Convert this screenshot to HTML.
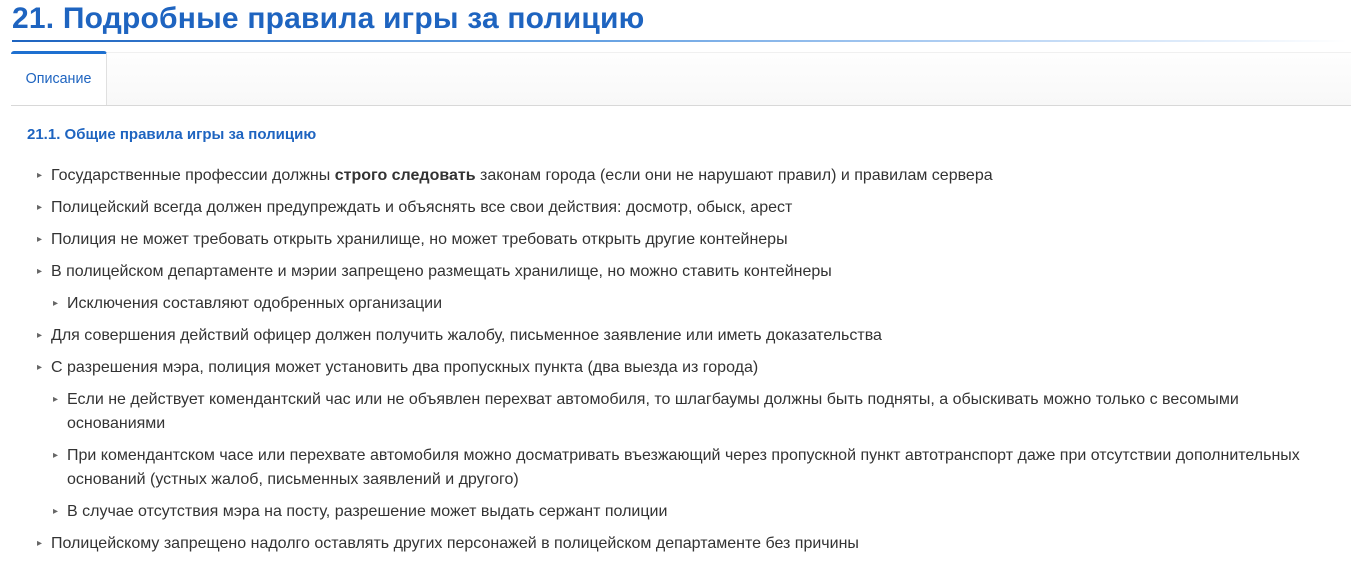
<!DOCTYPE html>
<html><head><meta charset="utf-8"><style>
body{margin:0;background:#fff;font-family:"Liberation Sans",sans-serif;width:1351px;height:561px;overflow:hidden;position:relative}
h1{position:absolute;left:12px;top:0;margin:0;font-size:30px;line-height:38px;color:#1e64c0;font-weight:bold;letter-spacing:0.2px}
.ul{position:absolute;left:12px;top:40px;width:1335px;height:2px;background:linear-gradient(90deg,#1e64c0,#5c9be0 40%,#bcd6f5 75%,rgba(255,255,255,0))}
.bar{position:absolute;left:11px;top:52px;width:1340px;height:52px;border-top:1px solid #f0f0f0;border-bottom:1px solid #d8d8d8;background:linear-gradient(#fefefe,#f8f8f8)}
.tab{position:absolute;left:11px;top:51px;width:96px;height:54px;background:#fff;border-top:3px solid #1e70d0;border-right:1px solid #e0e0e0;border-radius:3px 3px 0 0;box-sizing:border-box;font-size:14.3px;color:#1e64c0;text-align:center;line-height:50px}
h2{position:absolute;left:27px;top:126px;margin:0;font-size:15px;color:#1e64c0;font-weight:bold}
.li{position:absolute;left:51px;font-size:16px;color:#333;line-height:24px;width:1290px;white-space:nowrap}
.li:before{content:"▸";position:absolute;left:-14px;font-size:10px;color:#666}
.n{left:67px;width:1275px}
</style></head><body>
<h1>21. Подробные правила игры за полицию</h1>
<div class="ul"></div>
<div class="bar"></div>
<div class="tab">Описание</div>
<h2>21.1. Общие правила игры за полицию</h2>
<div class="li" style="top:164px">Государственные профессии должны <b>строго следовать</b> законам города (если они не нарушают правил) и правилам сервера</div>
<div class="li" style="top:196px">Полицейский всегда должен предупреждать и объяснять все свои действия: досмотр, обыск, арест</div>
<div class="li" style="top:228px">Полиция не может требовать открыть хранилище, но может требовать открыть другие контейнеры</div>
<div class="li" style="top:260px">В полицейском департаменте и мэрии запрещено размещать хранилище, но можно ставить контейнеры</div>
<div class="li n" style="top:292px">Исключения составляют одобренных организации</div>
<div class="li" style="top:324px">Для совершения действий офицер должен получить жалобу, письменное заявление или иметь доказательства</div>
<div class="li" style="top:356px">С разрешения мэра, полиция может установить два пропускных пункта (два выезда из города)</div>
<div class="li n" style="top:388px">Если не действует комендантский час или не объявлен перехват автомобиля, то шлагбаумы должны быть подняты, а обыскивать можно только с весомыми<br>основаниями</div>
<div class="li n" style="top:444px">При комендантском часе или перехвате автомобиля можно досматривать въезжающий через пропускной пункт автотранспорт даже при отсутствии дополнительных<br>оснований (устных жалоб, письменных заявлений и другого)</div>
<div class="li n" style="top:500px">В случае отсутствия мэра на посту, разрешение может выдать сержант полиции</div>
<div class="li" style="top:532px">Полицейскому запрещено надолго оставлять других персонажей в полицейском департаменте без причины</div>
</body></html>
